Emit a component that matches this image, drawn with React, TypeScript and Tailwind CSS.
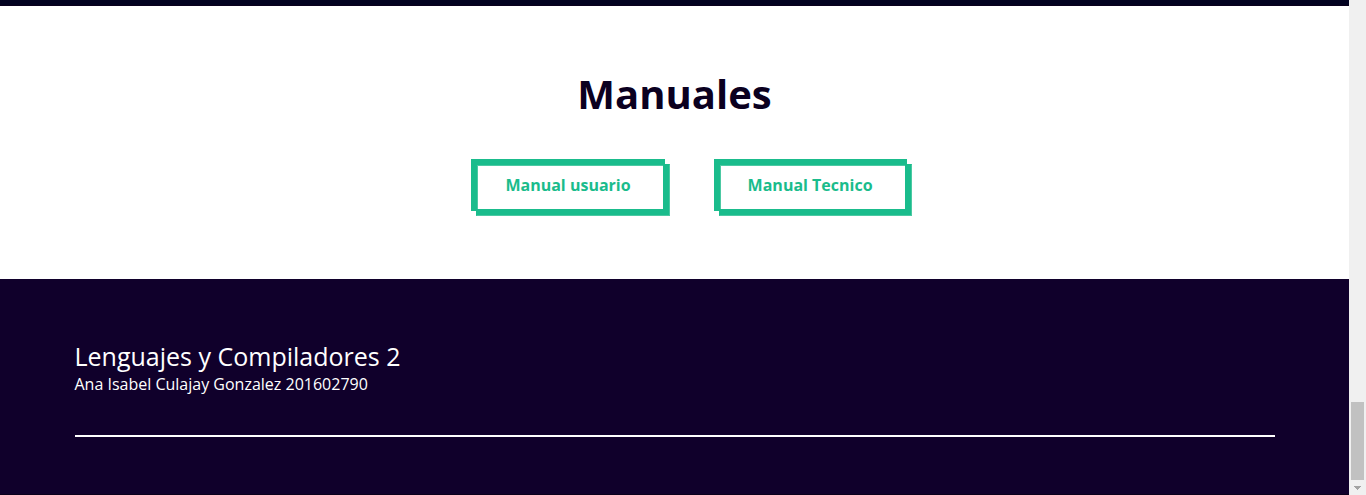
const manuals = [
  { label: "Manual usuario", href: "#manual-usuario" },
  { label: "Manual Tecnico", href: "#manual-tecnico" },
];

function ManualLink({ label, href }: { label: string; href: string }) {
  return (
    <a
      href={href}
      className="border border-t-[#1abc8c] border-l-[#1abc8c] border-r-[#4cc9a3] border-b-[#4cc9a3] pt-2 pr-[38px] pb-[18px] pl-7 text-base leading-6 font-bold text-[#1abc8c] shadow-[inset_-6px_-6px_0_#1abc8c,inset_1px_1px_0_#4cc9a3,-5px_-5px_0_#1abc8c]"
    >
      {label}
    </a>
  );
}

function ScrollTrack() {
  return (
    <div aria-hidden="true" className="flex w-[17px] shrink-0 flex-col items-center justify-end bg-[#f0f0f0]">
      <div className="h-[78px] w-[13px] bg-[#c1c1c1]" />
      <svg className="h-[15px] w-[17px]" viewBox="0 0 17 15" shapeRendering="crispEdges">
        <path d="M5 6h7v1h-1v1h-1v1h-1v1H8V9H7V8H6V7H5z" fill="#a3a3a3" />
      </svg>
    </div>
  );
}

export default function App() {
  return (
    <div className="flex min-h-screen font-['Open_Sans',sans-serif]">
      <div className="flex min-w-0 flex-1 flex-col">
        <div className="h-1.5 border-b border-[#0a001c] bg-[#020220]" />
        <main className="bg-white px-4 pt-[58px] pb-[63px]">
          <h1 className="text-center text-[40px] leading-[60px] font-bold text-[#0b001f]">Manuales</h1>
          <nav aria-label="Manuales" className="mt-10 flex flex-wrap justify-center gap-[49px] pl-[39px]">
            {manuals.map((manual) => (
              <ManualLink key={manual.href} {...manual} />
            ))}
          </nav>
        </main>
        <footer className="flex-1 border-b border-[#0a001c] bg-[#10002b] px-4 pt-[59px] text-white">
          <div className="mx-auto max-w-[1200px]">
            <h2 className="text-[25px] leading-9">Lenguajes y Compiladores 2</h2>
            <p className="text-base leading-5">Ana Isabel Culajay Gonzalez 201602790</p>
            <hr className="mt-[41px] border-t-2 border-white" />
          </div>
        </footer>
      </div>
      <ScrollTrack />
    </div>
  );
}
